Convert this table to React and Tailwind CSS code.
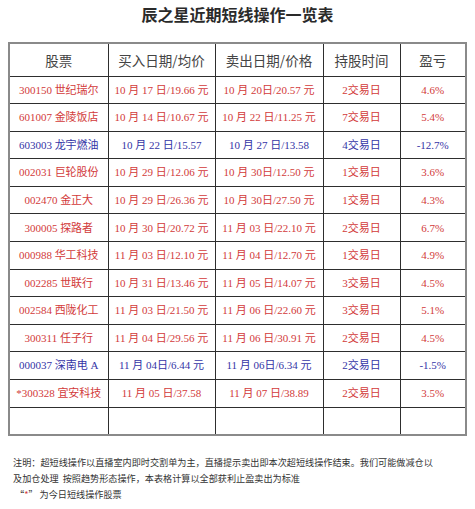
const rows = [
  ["300150 世纪瑞尔", "10 月 17 日/19.66 元", "10 月 20日/20.57 元", "2交易日", "4.6%", "r"],
  ["601007 金陵饭店", "10 月 14 日/10.67 元", "10 月 22 日/11.25 元", "7交易日", "5.4%", "r"],
  ["603003 龙宇燃油", "10 月 22 日/15.57", "10 月 27 日/13.58", "4交易日", "-12.7%", "b"],
  ["002031 巨轮股份", "10 月 29 日/12.06 元", "10 月 30日/12.50 元", "1交易日", "3.6%", "r"],
  ["002470 金正大", "10 月 29 日/26.36 元", "10 月 30日/27.50 元", "1交易日", "4.3%", "r"],
  ["300005 探路者", "10 月 30 日/20.72 元", "11 月 03 日/22.10 元", "2交易日", "6.7%", "r"],
  ["000988 华工科技", "11 月 03 日/12.10 元", "11 月 04 日/12.70 元", "1交易日", "4.9%", "r"],
  ["002285 世联行", "10 月 31 日/13.46 元", "11 月 05 日/14.07 元", "3交易日", "4.5%", "r"],
  ["002584 西陇化工", "11 月 03 日/21.50 元", "11 月 06 日/22.60 元", "3交易日", "5.1%", "r"],
  ["300311 任子行", "11 月 04 日/29.56 元", "11 月 06 日/30.91 元", "2交易日", "4.5%", "r"],
  ["000037 深南电 A", "11 月 04日/6.44 元", "11 月 06日/6.34 元", "2交易日", "-1.5%", "b"],
  ["*300328 宜安科技", "11 月 05 日/37.58", "11 月 07 日/38.89", "2交易日", "3.5%", "r"],
];

const cjk = { fontFamily: '"Noto Sans CJK SC", sans-serif' };
const mixed = { fontFamily: '"Liberation Serif", "Noto Sans CJK SC", serif' };

export default function App() {
  return (
    <div className="w-[475px] h-[509px] bg-white overflow-hidden">
      <div
        className="h-[28px] pt-[3px] text-center text-[16px] leading-[22px] font-bold text-[#2a2a2a]"
        style={cjk}
      >
        辰之星近期短线操作一览表
      </div>
      <div className="h-[14px]" />
      <table className="ml-[8px] w-[457px] table-fixed border-collapse border-2 border-[#8a8a8a]">
        <colgroup>
          <col className="w-[99px]" />
          <col className="w-[107px]" />
          <col className="w-[108px]" />
          <col className="w-[77px]" />
          <col className="w-[66px]" />
        </colgroup>
        <thead>
          <tr className="h-[33px]">
            {["股票", "买入日期/均价", "卖出日期/价格", "持股时间", "盈亏"].map((h) => (
              <th
                key={h}
                className="border border-[#2e2e2e] p-0 text-center text-[13.5px] font-normal text-[#444]"
                style={cjk}
              >
                {h}
              </th>
            ))}
          </tr>
        </thead>
        <tbody>
          {rows.map((r, i) => (
            <tr key={i} className="h-[27.6px]">
              {r.slice(0, 5).map((c, j) => (
                <td
                  key={j}
                  className={
                    "border border-[#2e2e2e] p-0 text-center text-[11px] whitespace-nowrap " +
                    (r[5] === "b" ? "text-[#3434a6]" : "text-[#d23a3a]")
                  }
                  style={mixed}
                >
                  {c}
                </td>
              ))}
            </tr>
          ))}
          <tr className="h-[27.6px]">
            {[0, 1, 2, 3, 4].map((j) => (
              <td key={j} className="border border-[#2e2e2e] p-0" />
            ))}
          </tr>
        </tbody>
      </table>
      <div
        className="mt-[18px] pl-[13px] text-[9.15px] leading-[16px] text-[#333] whitespace-nowrap"
        style={cjk}
      >
        <div>注明：超短线操作以直播室内即时交割单为主，直播提示卖出即本次超短线操作结束。我们可能做减仓以</div>
        <div>及加仓处理&nbsp;&nbsp;按照趋势形态操作，本表格计算以全部获利止盈卖出为标准</div>
        <div className="pl-[2px]">
          “<span className="text-[#d23a3a]">*</span>” 为今日短线操作股票
        </div>
      </div>
    </div>
  );
}
